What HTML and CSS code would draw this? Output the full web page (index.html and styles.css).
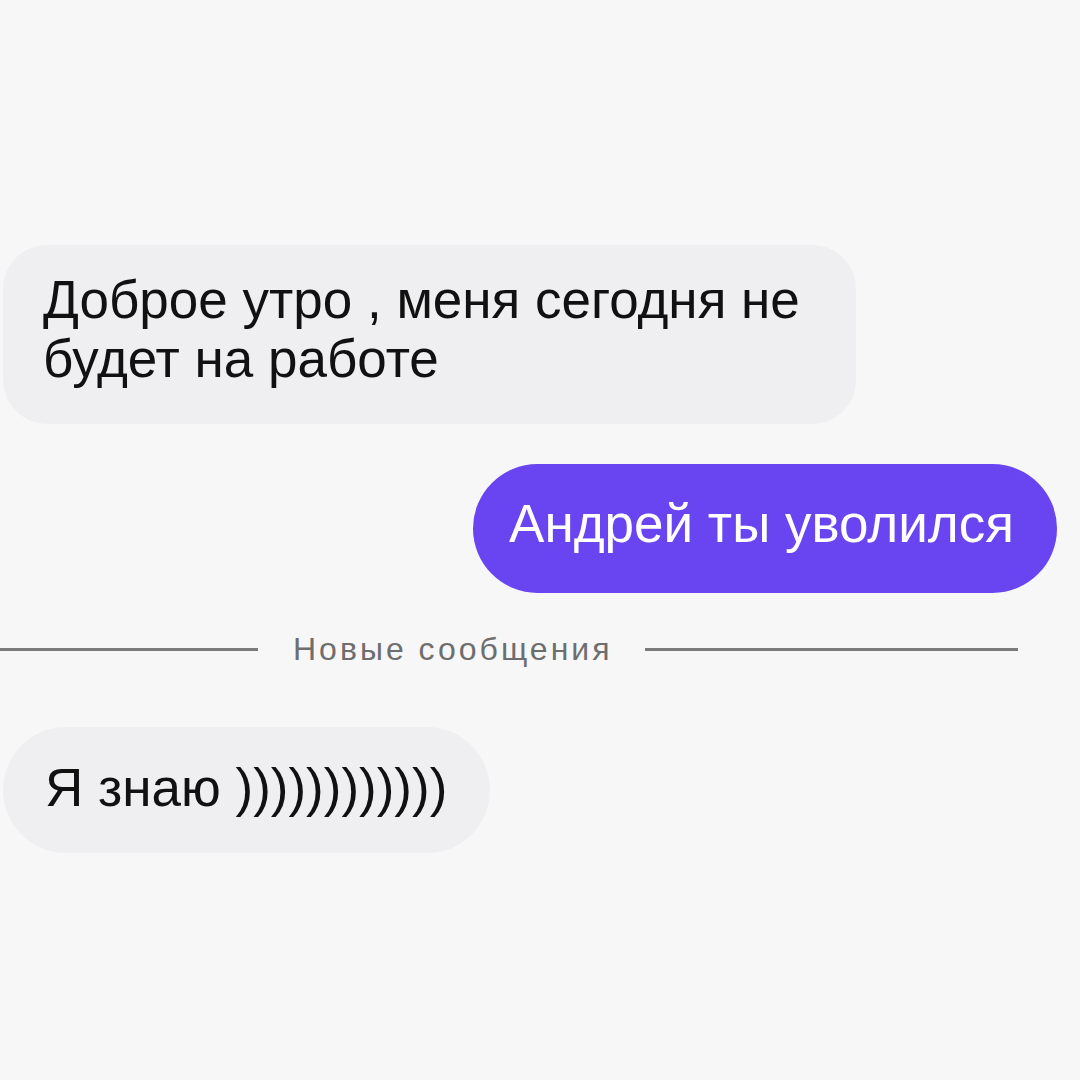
FILE: index.html
```html
<!DOCTYPE html>
<html lang="ru">
<head>
<meta charset="utf-8">
<link rel="stylesheet" href="styles.css">
</head>
<body>
<main class="chat">
  <div class="bubble incoming first">Доброе утро , меня сегодня не<br>будет на работе</div>
  <div class="bubble outgoing">Андрей ты уволился</div>
  <div class="divider"><span class="line left"></span><span class="label">Новые сообщения</span><span class="line right"></span></div>
  <div class="bubble incoming last">Я знаю ))))))))))))</div>
</main>
</body>
</html>
```
FILE: styles.css
```css
html, body {
  margin: 0;
  padding: 0;
  background: #f7f7f7;
}
.chat {
  width: 1080px;
  height: 1080px;
  display: flex;
  flex-direction: column;
  align-items: flex-start;
  padding-top: 245px;
  box-sizing: border-box;
  font-family: "Liberation Sans", Arial, sans-serif;
}
.bubble {
  font-size: 53px;
  line-height: 59px;
  color: #111;
  box-sizing: border-box;
  white-space: nowrap;
}
.incoming {
  background: #efeff1;
  margin-left: 3px;
}
.first {
  width: 853px;
  height: 179px;
  padding: 25px 40px 36px 40px;
  border-radius: 44px;
}
.outgoing {
  align-self: flex-end;
  margin-right: 23px;
  margin-top: 40px;
  height: 129px;
  padding: 30px 43px 40px 36px;
  border-radius: 65px;
  background: #6944f1;
  color: #fff;
}
.divider {
  display: flex;
  align-items: center;
  width: 1018px;
  margin-top: 40px;
  height: 32px;
}
.line {
  height: 3px;
  background: #7b7b7b;
}
.line.left { width: 258px; }
.line.right { flex: 1; }
.label {
  font-family: "Liberation Sans", Arial, sans-serif;
  font-size: 32px;
  letter-spacing: 3px;
  color: #6e6e6e;
  padding: 0 32px 0 35px;
  line-height: 32px;
}
.last {
  margin-top: 62px;
  height: 126px;
  padding: 31px 43px 36px 42px;
  border-radius: 63px;
}
```
